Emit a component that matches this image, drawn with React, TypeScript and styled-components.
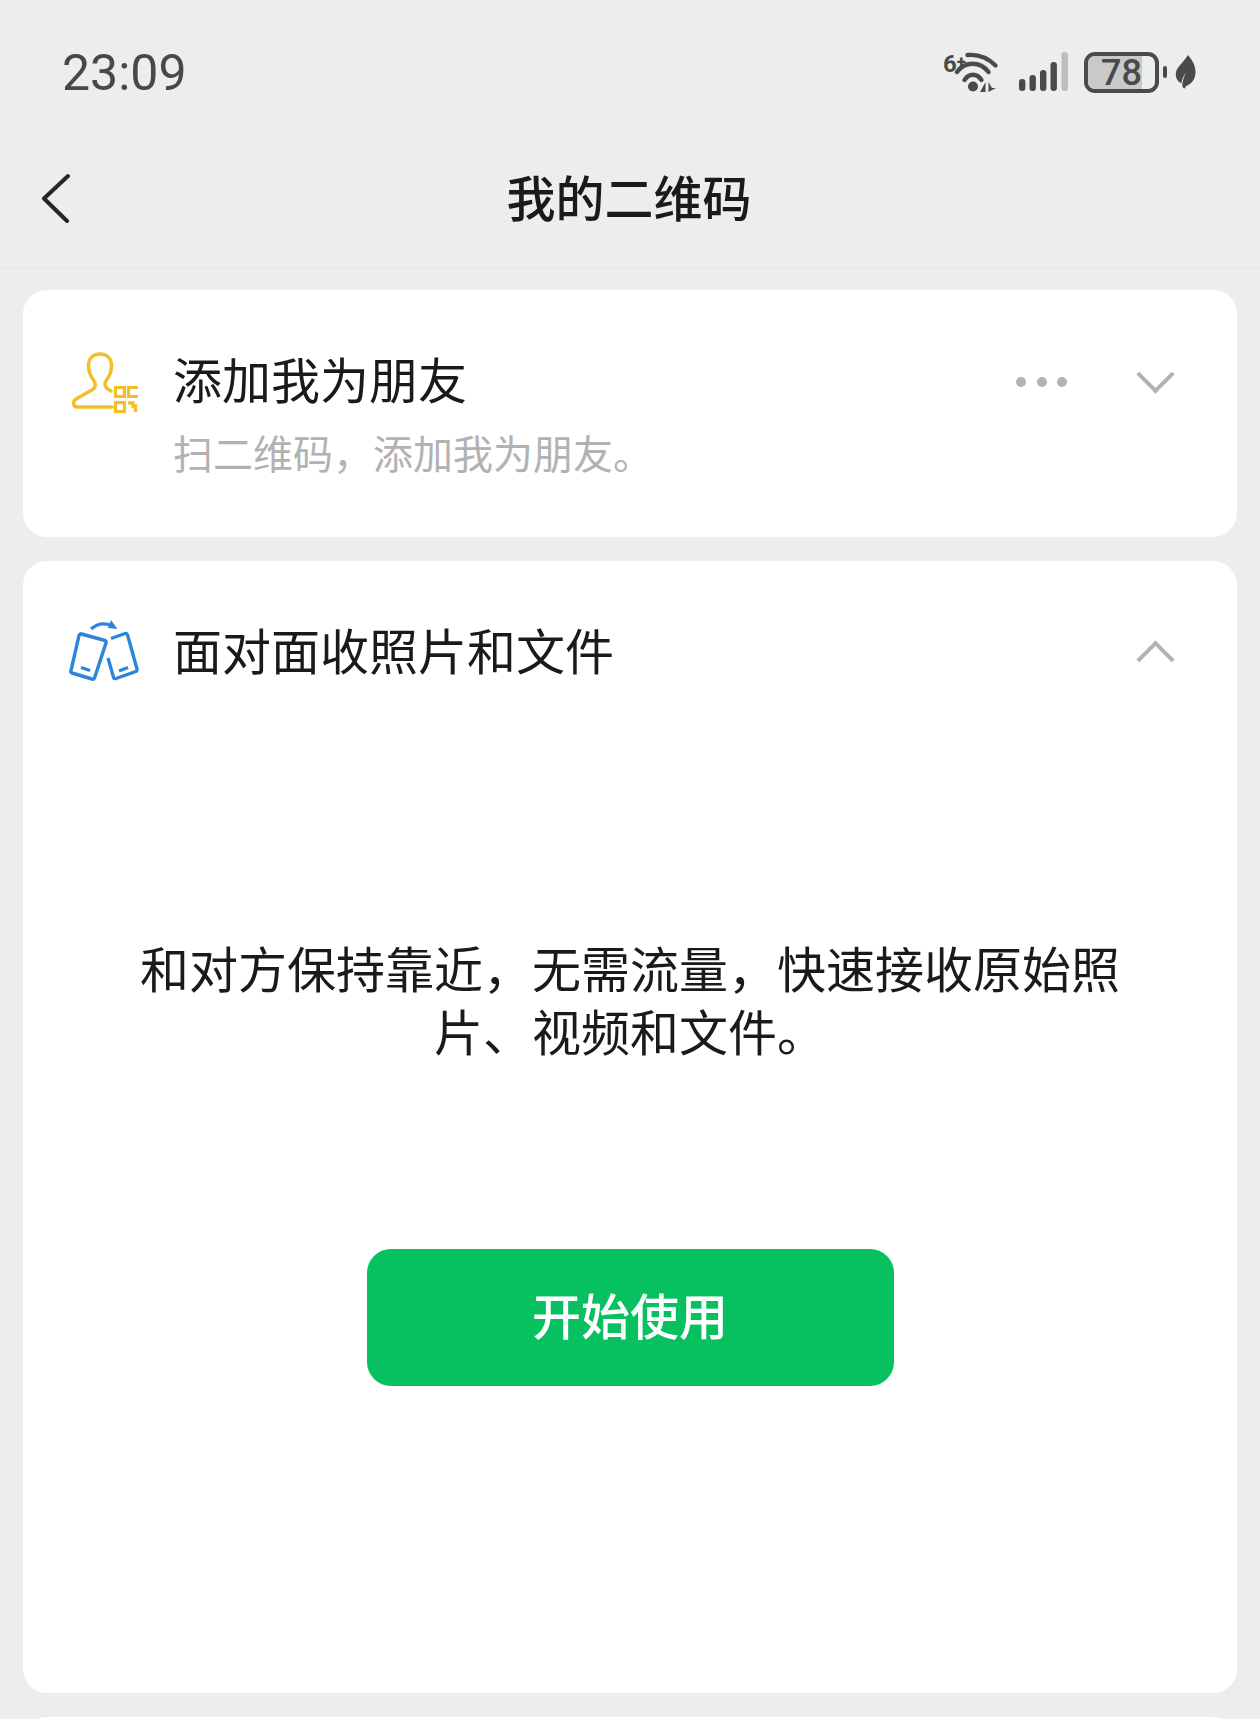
import * as React from "react";
import styled, { createGlobalStyle } from "styled-components";

const FONT = `"Noto Sans CJK SC", "Noto Sans", sans-serif`;

const GlobalStyle = createGlobalStyle`
  html, body {
    margin: 0;
    padding: 0;
    background: #ededed;
  }
  * {
    box-sizing: border-box;
  }
`;

function WifiIcon() {
  return (
    <svg width="58" height="44" viewBox="0 0 58 44">
      <g fill="none" stroke="#4a4a4a" strokeWidth="4.4" strokeLinecap="round">
        <path d="M24.5 5C35 4 45 8 52.5 15.5" />
        <path d="M14 22C22 11 37 11 45.5 22" />
        <path d="M21.5 30C26 23 34 23 38.5 30" />
      </g>
      <circle cx="30" cy="36.5" r="5" fill="#4a4a4a" />
      <path d="M42.5 32V42H37ZM45.5 32V42L53 38H49Z" fill="#4a4a4a" />
    </svg>
  );
}

function SignalIcon() {
  const bars = [
    { x: 0, h: 12 },
    { x: 10.5, h: 16 },
    { x: 21, h: 21 },
    { x: 31.5, h: 29 },
  ];
  return (
    <svg width="49" height="40" viewBox="0 0 49 40">
      {bars.map((b) => (
        <rect key={b.x} x={b.x} y={39 - b.h} width="6.4" height={b.h} rx="3" fill="#4a4a4a" />
      ))}
      <rect x="42.5" y="0" width="6.4" height="39" rx="3" fill="#bdbdbd" />
    </svg>
  );
}

function LeafIcon() {
  return (
    <svg width="21" height="34" viewBox="0 0 21 34">
      <path d="M13 0C17 5 20.5 10 20.5 17C20.5 25 16 29 10.5 31.5L10 33.5L8.5 33C6 31 8 24 11 17C8.5 21 6.8 25 6.3 28.5C2.5 26 0 22.5 1 17.5C2 11.5 9 7 13 0Z" fill="#4a4a4a" />
    </svg>
  );
}

function ContactQrIcon() {
  return (
    <svg width="70" height="64" viewBox="0 0 70 64" fill="none" stroke="#f2bf2a" overflow="visible">
      <path
        d="M42 57H7C3 57 2.5 51 6 49L22 40C26 37.5 26 34 24 31C20.5 26 18.5 22 18.5 16C18.5 8 23.5 4 30 4C36.5 4 41.5 8 41.5 16C41.5 22 39.5 26 36.5 30C34.5 33 34.5 36 37 38.5L41 41"
        strokeWidth="3.5"
        strokeLinecap="round"
      />
      <rect x="45.5" y="37.5" width="9" height="9" strokeWidth="3.2" />
      <rect x="45.5" y="52.5" width="9" height="9" strokeWidth="3.2" />
      <path d="M68 37.5H58.5V46.5H68" strokeWidth="3.2" />
      <path d="M58 53H63V56H65.5V62" strokeWidth="3.4" />
    </svg>
  );
}

function PhonesIcon() {
  return (
    <svg width="70" height="72" viewBox="0 0 70 72" fill="none" stroke="#2b86d9" overflow="visible">
      <path d="M21 12C27 6.5 35 5.5 43 9" strokeWidth="3.2" />
      <path d="M41 3L47.5 12L38 11Z" fill="#2b86d9" stroke="none" />
      <path
        d="M11.5 17L35 23.5C36 24 36.5 25 36 26L24.5 61C24 62 23 62.5 22 62L2 56C1 55.5 0.5 54.5 1 53.5L9 18.5C9.5 17.5 10.5 16.5 11.5 17Z"
        strokeWidth="3.4"
        strokeLinejoin="round"
      />
      <path d="M11 50.5L20 53.5" strokeWidth="3.4" />
      <path
        d="M41 21.5L55 16.5C56 16.2 57 16.8 57.5 17.8L67 52C67.2 53 66.8 54 65.8 54.5L46 61.5C45 61.8 44 61.4 43.5 60.4L38 41"
        strokeWidth="3.4"
        strokeLinejoin="round"
      />
      <path d="M49 54L58 50.5" strokeWidth="3.4" />
    </svg>
  );
}

export default function App() {
  return (
    <Page>
      <GlobalStyle />
      <StatusBar>
        <Clock>23:09</Clock>
        <StatusIcons>
          <WifiSlot>
            <WifiIcon />
            <WifiBadge>
              6<WifiPlus>+</WifiPlus>
            </WifiBadge>
          </WifiSlot>
          <SignalSlot>
            <SignalIcon />
          </SignalSlot>
          <Battery>
            <BatteryFill style={{ width: "80%" }} />
            <BatteryLevel>78</BatteryLevel>
          </Battery>
          <BatteryTip />
          <LeafIcon />
        </StatusIcons>
      </StatusBar>
      <Header>
        <BackButton>
          <svg width="28" height="50" viewBox="0 0 28 50" fill="none">
            <path d="M26 3L2 25.5L25 48" stroke="#262626" strokeWidth="4" strokeLinecap="round" strokeLinejoin="round" />
          </svg>
        </BackButton>
        <Title>我的二维码</Title>
      </Header>
      <Cards>
        <Card $height={247}>
          <CardRow>
            <IconSlot>
              <ContactQrIcon />
            </IconSlot>
            <RowTitle>添加我为朋友</RowTitle>
            <Dots>
              <Dot />
              <Dot />
              <Dot />
            </Dots>
            <Chevron $up={false} />
          </CardRow>
          <Subtitle>扫二维码，添加我为朋友。</Subtitle>
        </Card>
        <Card $height={1132}>
          <CardRow>
            <IconSlot>
              <PhonesIcon />
            </IconSlot>
            <RowTitle>面对面收照片和文件</RowTitle>
            <Chevron $up />
          </CardRow>
          <Description>和对方保持靠近，无需流量，快速接收原始照片、视频和文件。</Description>
          <StartButton>开始使用</StartButton>
        </Card>
        <Card $height={60} />
      </Cards>
    </Page>
  );
}

const Page = styled.div`
  width: 1260px;
  height: 1719px;
  overflow: hidden;
  background: #ededed;
  font-family: ${FONT};
  color: #1a1a1a;
`;

const StatusBar = styled.div`
  height: 130px;
  padding: 14px 64px 0 62px;
  display: flex;
  align-items: center;
  justify-content: space-between;
`;

const Clock = styled.div`
  font-family: Roboto, sans-serif;
  font-size: 50px;
  font-weight: 400;
  line-height: 60px;
  padding-top: 2px;
  color: #484848;
`;

const StatusIcons = styled.div`
  display: flex;
  align-items: center;
`;

const WifiSlot = styled.div`
  position: relative;
  display: flex;
  margin-right: 18px;
`;

const WifiBadge = styled.span`
  position: absolute;
  left: 0;
  top: 0;
  font-family: Roboto, sans-serif;
  font-size: 24px;
  font-weight: 700;
  line-height: 22px;
  color: #4a4a4a;
`;

const WifiPlus = styled.span`
  font-size: 17px;
  font-weight: 900;
  vertical-align: 5px;
`;

const SignalSlot = styled.div`
  display: flex;
  margin-right: 16px;
`;

const Battery = styled.div`
  position: relative;
  width: 75px;
  height: 41px;
  border: 4px solid #4a4a4a;
  border-radius: 11px;
  display: flex;
  align-items: center;
  justify-content: center;
`;

const BatteryFill = styled.div`
  position: absolute;
  left: 0;
  top: 0;
  bottom: 0;
  border-radius: 7px 0 0 7px;
  background: #c9c9c9;
`;

const BatteryLevel = styled.span`
  position: relative;
  top: 1px;
  font-family: Roboto, sans-serif;
  font-size: 36px;
  font-weight: 500;
  line-height: 33px;
  color: #4a4a4a;
`;

const BatteryTip = styled.div`
  width: 4px;
  height: 12px;
  border-radius: 2px;
  margin: 0 8px 0 4px;
  background: #4a4a4a;
`;

const Header = styled.div`
  position: relative;
  height: 138px;
  display: flex;
  align-items: center;
  justify-content: center;
  border-bottom: 1px solid #e5e5e5;
`;

const BackButton = styled.div`
  position: absolute;
  left: 42px;
  top: 43px;
  display: flex;
`;

const Title = styled.div`
  font-size: 49px;
  font-weight: 500;
  line-height: 60px;
  padding-bottom: 6px;
  padding-right: 2px;
`;

const Cards = styled.div`
  padding: 22px 23px 0;
  display: flex;
  flex-direction: column;
  gap: 24px;
`;

const Card = styled.div<{ $height: number }>`
  flex: none;
  height: ${(props) => props.$height}px;
  background: #ffffff;
  border-radius: 24px;
  display: flex;
  flex-direction: column;
`;

const CardRow = styled.div`
  height: 184px;
  flex: none;
  padding: 0 64px 0 47px;
  display: flex;
  align-items: center;
`;

const IconSlot = styled.div`
  width: 103px;
  display: flex;
`;

const RowTitle = styled.div`
  flex: 1;
  font-size: 49px;
  line-height: 60px;
  padding-bottom: 8px;
`;

const Dots = styled.div`
  display: flex;
  gap: 10.5px;
  margin-right: 71px;
`;

const Dot = styled.span`
  width: 10px;
  height: 10px;
  border-radius: 50%;
  background: #b2b2b2;
`;

const Chevron = styled.span<{ $up: boolean }>`
  width: 27px;
  height: 27px;
  flex: none;
  border-right: 4px solid #b2b2b2;
  border-bottom: 4px solid #b2b2b2;
  margin: 0 4px;
  transform: translateY(${(props) => (props.$up ? "6px" : "-8px")})
    rotate(${(props) => (props.$up ? "-135deg" : "45deg")});
`;

const Subtitle = styled.div`
  margin-top: -46px;
  padding-left: 150px;
  font-size: 40px;
  line-height: 48px;
  color: #b2b2b2;
`;

const Description = styled.div`
  margin-top: 190px;
  padding: 0 115px;
  font-size: 49px;
  line-height: 63px;
  text-align: center;
`;

const StartButton = styled.div`
  align-self: center;
  margin-top: 188px;
  width: 527px;
  height: 137px;
  padding-bottom: 8px;
  border-radius: 24px;
  background: #07c160;
  color: #ffffff;
  font-size: 49px;
  font-weight: 500;
  display: flex;
  align-items: center;
  justify-content: center;
`;
